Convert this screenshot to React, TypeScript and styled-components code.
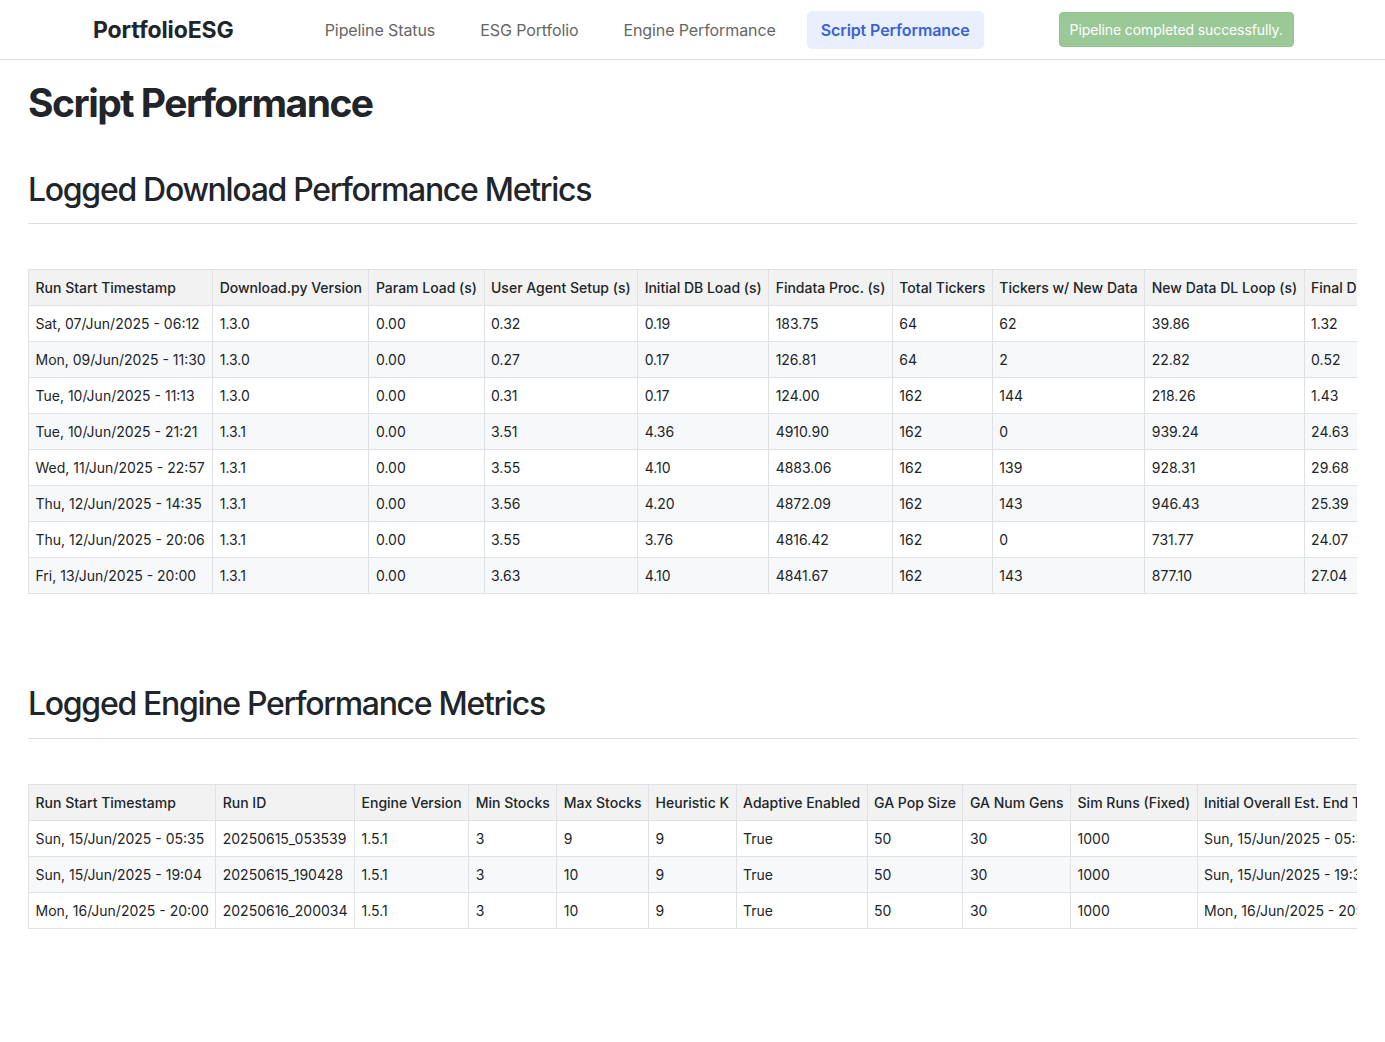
import styled, { createGlobalStyle } from "styled-components";

const GlobalStyle = createGlobalStyle`
  body {
    margin: 0;
    font-family: Inter, "Noto Sans", "Liberation Sans", sans-serif;
    color: #212529;
    background: #fff;
  }
`;

const downloadHeaders = [
  "Run Start Timestamp",
  "Download.py Version",
  "Param Load (s)",
  "User Agent Setup (s)",
  "Initial DB Load (s)",
  "Findata Proc. (s)",
  "Total Tickers",
  "Tickers w/ New Data",
  "New Data DL Loop (s)",
  "Final DB Save (s)",
  "Total Script (s)",
];

const downloadRows = [
  ["Sat, 07/Jun/2025 - 06:12", "1.3.0", "0.00", "0.32", "0.19", "183.75", "64", "62", "39.86", "1.32", "226.12"],
  ["Mon, 09/Jun/2025 - 11:30", "1.3.0", "0.00", "0.27", "0.17", "126.81", "64", "2", "22.82", "0.52", "150.94"],
  ["Tue, 10/Jun/2025 - 11:13", "1.3.0", "0.00", "0.31", "0.17", "124.00", "162", "144", "218.26", "1.43", "344.55"],
  ["Tue, 10/Jun/2025 - 21:21", "1.3.1", "0.00", "3.51", "4.36", "4910.90", "162", "0", "939.24", "24.63", "5882.64"],
  ["Wed, 11/Jun/2025 - 22:57", "1.3.1", "0.00", "3.55", "4.10", "4883.06", "162", "139", "928.31", "29.68", "5848.70"],
  ["Thu, 12/Jun/2025 - 14:35", "1.3.1", "0.00", "3.56", "4.20", "4872.09", "162", "143", "946.43", "25.39", "5851.67"],
  ["Thu, 12/Jun/2025 - 20:06", "1.3.1", "0.00", "3.55", "3.76", "4816.42", "162", "0", "731.77", "24.07", "5579.57"],
  ["Fri, 13/Jun/2025 - 20:00", "1.3.1", "0.00", "3.63", "4.10", "4841.67", "162", "143", "877.10", "27.04", "5753.54"],
];

const engineHeaders = [
  "Run Start Timestamp",
  "Run ID",
  "Engine Version",
  "Min Stocks",
  "Max Stocks",
  "Heuristic K",
  "Adaptive Enabled",
  "GA Pop Size",
  "GA Num Gens",
  "Sim Runs (Fixed)",
  "Initial Overall Est. End Time",
  "Actual End Time",
];

const engineRows = [
  ["Sun, 15/Jun/2025 - 05:35", "20250615_053539", "1.5.1", "3", "9", "9", "True", "50", "30", "1000", "Sun, 15/Jun/2025 - 05:38", "Sun, 15/Jun/2025 - 06:02"],
  ["Sun, 15/Jun/2025 - 19:04", "20250615_190428", "1.5.1", "3", "10", "9", "True", "50", "30", "1000", "Sun, 15/Jun/2025 - 19:37", "Sun, 15/Jun/2025 - 19:58"],
  ["Mon, 16/Jun/2025 - 20:00", "20250616_200034", "1.5.1", "3", "10", "9", "True", "50", "30", "1000", "Mon, 16/Jun/2025 - 20:31", "Mon, 16/Jun/2025 - 20:55"],
];

const navItems = ["Pipeline Status", "ESG Portfolio", "Engine Performance", "Script Performance"];

const MetricsTable = ({ headers, rows }: { headers: string[]; rows: string[][] }) => (
  <TableScroller>
    <Table>
      <thead>
        <tr>
          {headers.map((h) => (
            <HeadCell key={h}>{h}</HeadCell>
          ))}
        </tr>
      </thead>
      <tbody>
        {rows.map((row, i) => (
          <BodyRow key={i} $striped={i % 2 === 1}>
            {row.map((cell, j) => (
              <Cell key={j}>{cell}</Cell>
            ))}
          </BodyRow>
        ))}
      </tbody>
    </Table>
  </TableScroller>
);

const App = () => {
  return (
    <>
      <GlobalStyle />
      <NavBar>
        <Brand>PortfolioESG</Brand>
        <NavList>
          {navItems.map((item) => (
            <NavLink key={item} $active={item === "Script Performance"}>
              {item}
            </NavLink>
          ))}
        </NavList>
        <StatusAlert>Pipeline completed successfully.</StatusAlert>
      </NavBar>
      <Main>
        <PageTitle>Script Performance</PageTitle>
        <Section>
          <SectionTitle>Logged Download Performance Metrics</SectionTitle>
          <MetricsTable headers={downloadHeaders} rows={downloadRows} />
        </Section>
        <Section>
          <SectionTitle>Logged Engine Performance Metrics</SectionTitle>
          <MetricsTable headers={engineHeaders} rows={engineRows} />
        </Section>
      </Main>
    </>
  );
};

const NavBar = styled.nav`
  display: flex;
  align-items: center;
  height: 60px;
  padding: 0 0 0 93px;
  border-bottom: 1px solid #dcdcdc;
  box-sizing: border-box;
`;

const Brand = styled.div`
  font-size: 23px;
  font-weight: 700;
  color: #212529;
  letter-spacing: -0.1px;
  margin-right: 77px;
`;

const NavList = styled.div`
  display: flex;
  align-items: center;
  gap: 17px;
`;

const NavLink = styled.a<{ $active?: boolean }>`
  display: block;
  padding: 9px 14px;
  border-radius: 5px;
  font-size: 16px;
  font-weight: ${(p) => (p.$active ? 600 : 400)};
  color: ${(p) => (p.$active ? "#3a63d4" : "#666")};
  background: ${(p) => (p.$active ? "#e9effc" : "transparent")};
  cursor: pointer;
  letter-spacing: -0.1px;
`;

const StatusAlert = styled.div`
  margin-left: 75px;
  padding: 8px 10px;
  border-radius: 4px;
  background: #9ac897;
  border: 1px solid #92c48f;
  color: #fff;
  font-size: 14px;
  letter-spacing: -0.1px;
`;

const Main = styled.main`
  padding: 0 28px 60px;
`;

const PageTitle = styled.h1`
  margin: 20px 0 0;
  font-size: 39px;
  font-weight: 700;
  letter-spacing: -1.5px;
  line-height: 1.2;
`;

const Section = styled.section`
  margin-top: 44px;

  & + & {
    margin-top: 91px;
  }
`;

const SectionTitle = styled.h2`
  margin: 0 0 45px;
  padding-bottom: 14px;
  border-bottom: 1px solid #dedede;
  font-size: 32px;
  font-weight: 500;
  letter-spacing: -1.3px;
  line-height: 1.2;
`;

const TableScroller = styled.div`
  overflow: hidden;
`;

const Table = styled.table`
  border-collapse: collapse;
  font-size: 14px;
  white-space: nowrap;
`;

const HeadCell = styled.th`
  text-align: left;
  font-weight: 500;
  padding: 7px 6.5px;
  line-height: 21px;
  background: #f2f2f2;
  border: 1px solid #dee2e6;
  color: #212529;
`;

const BodyRow = styled.tr<{ $striped?: boolean }>`
  background: ${(p) => (p.$striped ? "#f7f8fa" : "#fff")};
`;

const Cell = styled.td`
  padding: 7px 6.5px;
  line-height: 21px;
  border: 1px solid #dee2e6;
  color: #212529;
`;

export default App;
